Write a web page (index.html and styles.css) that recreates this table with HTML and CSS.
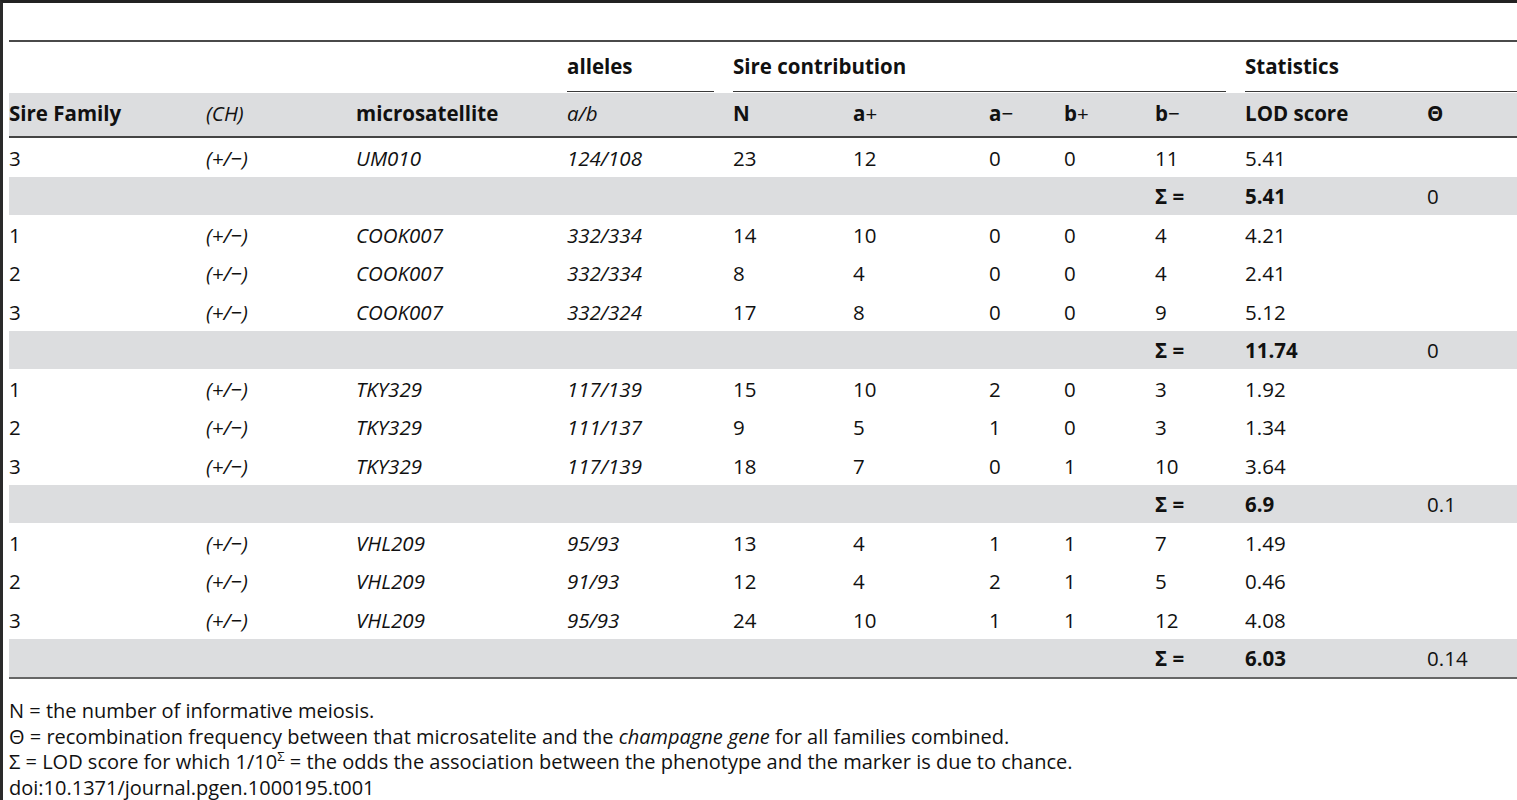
FILE: index.html
```html
<!DOCTYPE html>
<html>
<head>
<meta charset="utf-8">
<link rel="stylesheet" href="styles.css">
</head>
<body>
<div class="page">
  <div class="caption-space"></div>
  <table class="tbl">
    <colgroup>
      <col class="w197"><col class="w150"><col class="w211"><col class="w166"><col class="w120"><col class="w136"><col class="w75"><col class="w91"><col class="w90"><col class="w182"><col class="w90">
    </colgroup>
    <thead>
      <tr class="grp">
        <th></th><th></th><th></th>
        <th><div class="grp-line">alleles</div></th>
        <th colspan="5"><div class="grp-line">Sire contribution</div></th>
        <th colspan="2"><div class="grp-line last">Statistics</div></th>
      </tr>
      <tr class="hdr">
        <th>Sire Family</th>
        <th class="it nb">(CH)</th>
        <th>microsatellite</th>
        <th class="it nb">a/b</th>
        <th>N</th>
        <th>a<span class="nb">+</span></th>
        <th>a<span class="nb">−</span></th>
        <th>b<span class="nb">+</span></th>
        <th>b<span class="nb">−</span></th>
        <th>LOD score</th>
        <th>Θ</th>
      </tr>
    </thead>
    <tbody>
      <tr><td>3</td><td class="it">(+/−)</td><td class="it">UM010</td><td class="it">124/108</td><td>23</td><td>12</td><td>0</td><td>0</td><td>11</td><td>5.41</td><td></td></tr>
      <tr class="sum"><td></td><td></td><td></td><td></td><td></td><td></td><td></td><td></td><td class="b">Σ =</td><td class="b">5.41</td><td>0</td></tr>
      <tr><td>1</td><td class="it">(+/−)</td><td class="it">COOK007</td><td class="it">332/334</td><td>14</td><td>10</td><td>0</td><td>0</td><td>4</td><td>4.21</td><td></td></tr>
      <tr><td>2</td><td class="it">(+/−)</td><td class="it">COOK007</td><td class="it">332/334</td><td>8</td><td>4</td><td>0</td><td>0</td><td>4</td><td>2.41</td><td></td></tr>
      <tr><td>3</td><td class="it">(+/−)</td><td class="it">COOK007</td><td class="it">332/324</td><td>17</td><td>8</td><td>0</td><td>0</td><td>9</td><td>5.12</td><td></td></tr>
      <tr class="sum"><td></td><td></td><td></td><td></td><td></td><td></td><td></td><td></td><td class="b">Σ =</td><td class="b">11.74</td><td>0</td></tr>
      <tr><td>1</td><td class="it">(+/−)</td><td class="it">TKY329</td><td class="it">117/139</td><td>15</td><td>10</td><td>2</td><td>0</td><td>3</td><td>1.92</td><td></td></tr>
      <tr><td>2</td><td class="it">(+/−)</td><td class="it">TKY329</td><td class="it">111/137</td><td>9</td><td>5</td><td>1</td><td>0</td><td>3</td><td>1.34</td><td></td></tr>
      <tr><td>3</td><td class="it">(+/−)</td><td class="it">TKY329</td><td class="it">117/139</td><td>18</td><td>7</td><td>0</td><td>1</td><td>10</td><td>3.64</td><td></td></tr>
      <tr class="sum"><td></td><td></td><td></td><td></td><td></td><td></td><td></td><td></td><td class="b">Σ =</td><td class="b">6.9</td><td>0.1</td></tr>
      <tr><td>1</td><td class="it">(+/−)</td><td class="it">VHL209</td><td class="it">95/93</td><td>13</td><td>4</td><td>1</td><td>1</td><td>7</td><td>1.49</td><td></td></tr>
      <tr><td>2</td><td class="it">(+/−)</td><td class="it">VHL209</td><td class="it">91/93</td><td>12</td><td>4</td><td>2</td><td>1</td><td>5</td><td>0.46</td><td></td></tr>
      <tr><td>3</td><td class="it">(+/−)</td><td class="it">VHL209</td><td class="it">95/93</td><td>24</td><td>10</td><td>1</td><td>1</td><td>12</td><td>4.08</td><td></td></tr>
      <tr class="sum"><td></td><td></td><td></td><td></td><td></td><td></td><td></td><td></td><td class="b">Σ =</td><td class="b">6.03</td><td>0.14</td></tr>
    </tbody>
  </table>
  <div class="notes">
    <div>N = the number of informative meiosis.</div>
    <div>Θ = recombination frequency between that microsatelite and the <i>champagne gene</i> for all families combined.</div>
    <div>Σ = LOD score for which 1/10<sup>Σ</sup> = the odds the association between the phenotype and the marker is due to chance.</div>
    <div>doi:10.1371/journal.pgen.1000195.t001</div>
  </div>
</div>
</body>
</html>
```

FILE: styles.css
```css
html, body {
  margin: 0;
  padding: 0;
  background: #fff;
}
body {
  font-family: "Open Sans", "Liberation Sans", sans-serif;
  font-size: 20px;
  color: #111;
  overflow: hidden;
}
.page {
  border-top: 3px solid #222;
  border-left: 3px solid #2a2a2a;
  padding-left: 6px;
  height: 800px;
  box-sizing: border-box;
}
.caption-space {
  height: 37px;
}
.tbl {
  width: 1508px;
  table-layout: fixed;
  border-collapse: separate;
  border-spacing: 0;
  border-top: 2px solid #4a4a4a;
  font-size: 20.5px;
}
.w197 { width: 197px; }
.w150 { width: 150px; }
.w211 { width: 211px; }
.w166 { width: 166px; }
.w120 { width: 120px; }
.w136 { width: 136px; }
.w75 { width: 75px; }
.w91 { width: 91px; }
.w90 { width: 90px; }
.w182 { width: 182px; }
th, td {
  padding: 0;
  text-align: left;
  white-space: nowrap;
}
th {
  font-weight: 700;
}
.grp th {
  height: 51px;
  vertical-align: bottom;
}
.grp-line {
  line-height: 24px;
  padding-bottom: 13px;
  border-bottom: 1px solid #3a3a3a;
  margin-right: 19px;
  margin-bottom: 1px;
}
.grp-line.last {
  margin-right: 0;
}
.hdr th {
  background: #dcdddf;
  height: 45px;
  line-height: 24px;
  padding-bottom: 3px;
  box-sizing: border-box;
  vertical-align: middle;
  border-bottom: 2px solid #444;
}
.it { font-style: italic; }
.nb { font-weight: 400; }
.b { font-weight: 700; }
tbody td {
  height: 38.5px;
  line-height: 24px;
  vertical-align: middle;
  padding-top: 1px;
  box-sizing: border-box;
}
tbody tr.sum td {
  background: #dcdddf;
}
tbody tr:last-child td {
  border-bottom: 2px solid #666;
  box-sizing: content-box;
  height: 37.5px;
}
.notes {
  padding-top: 19px;
  line-height: 25.5px;
}
.notes sup {
  font-size: 13px;
  line-height: 0;
  vertical-align: 8px;
}
```
